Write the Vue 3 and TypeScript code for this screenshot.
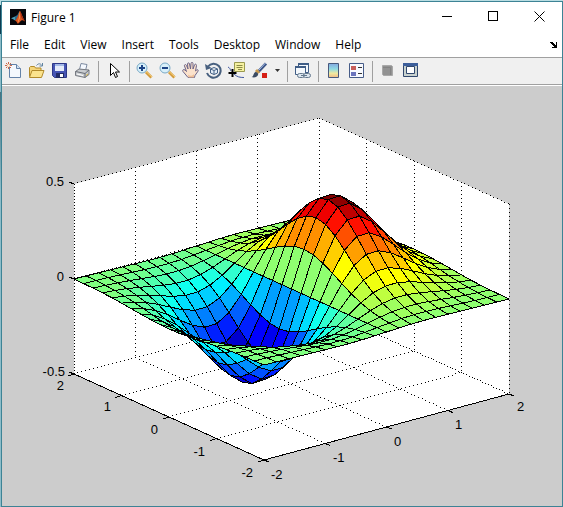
<script setup lang="ts">
type Point = [number, number]

interface Face {
  points: string
  fill: string
}

interface Label {
  text: string
  x: number
  y: number
  anchor: 'start' | 'middle' | 'end'
}

const menus: string[] = ['File', 'Edit', 'View', 'Insert', 'Tools', 'Desktop', 'Window', 'Help']

/* Orthographic projection of data coordinates into the figure canvas. */
function project(x: number, y: number, z: number): Point {
  return [
    262 + 61.25 * (x + 2) - 47.5 * (y + 2),
    374 - 16.5 * (x + 2) - 21.5 * (y + 2) - 190 * (z + 0.5),
  ]
}

function toPoints(list: Point[]): string {
  return list.map(([x, y]) => `${x.toFixed(1)},${y.toFixed(1)}`).join(' ')
}

const nodes: number[] = Array.from({ length: 21 }, (_, i) => (i - 10) / 5)
const height = (x: number, y: number): number => x * Math.exp(-x * x - y * y)
const peak = height(0.8, 0)

/* 64-step jet colormap. */
function ramp(k: number): number {
  if (k < 1 || k > 47) return 0
  if (k <= 16) return k / 16
  if (k <= 31) return 1
  return (48 - k) / 16
}

function jet(z: number): string {
  const k = Math.min(64, Math.floor(((z + peak) / (2 * peak)) * 64 + 1e-9) + 1)
  const channel = (offset: number) => Math.round(255 * ramp(k + offset))
  return `rgb(${channel(-24)}, ${channel(-8)}, ${channel(8)})`
}

/* Faces are listed from the far corner to the near one. */
const faces: Face[] = []
for (let i = 19; i >= 0; i--) {
  for (let j = 19; j >= 0; j--) {
    const [x0, x1, y0, y1] = [nodes[i], nodes[i + 1], nodes[j], nodes[j + 1]]
    const corners: Point[] = [[x0, y0], [x1, y0], [x1, y1], [x0, y1]]
    faces.push({
      points: toPoints(corners.map(([x, y]) => project(x, y, height(x, y)))),
      fill: jet(height(x0, y0)),
    })
  }
}

/* A dotted line as single-pixel squares. */
function dots(a: Point, b: Point, gap = 4): string {
  const length = Math.hypot(b[0] - a[0], b[1] - a[1])
  let d = ''
  for (let s = 0; s <= length; s += gap) {
    const t = s / length
    const x = Math.floor(a[0] + (b[0] - a[0]) * t)
    const y = Math.floor(a[1] + (b[1] - a[1]) * t)
    d += `M${x} ${y}h1v1h-1z`
  }
  return d
}

const walls = toPoints([
  project(-2, -2, -0.5),
  project(2, -2, -0.5),
  project(2, -2, 0.5),
  project(2, 2, 0.5),
  project(-2, 2, 0.5),
  project(-2, 2, -0.5),
])

const inner = [-1, 0, 1]
const grid: string = [
  ...inner.map((x) => dots(project(x, 2, 0.5), project(x, 2, -0.5))),
  ...inner.map((y) => dots(project(2, y, 0.5), project(2, y, -0.5))),
  ...inner.map((x) => dots(project(x, -2, -0.5), project(x, 2, -0.5))),
  ...inner.map((y) => dots(project(-2, y, -0.5), project(2, y, -0.5))),
  dots(project(2, 2, 0.5), project(2, 2, -0.5)),
  dots(project(-2, 2, 0.5), project(2, 2, 0.5)),
  dots(project(2, 2, 0.5), project(2, -2, 0.5)),
  dots(project(-2, 2, 0), project(2, 2, 0)),
  dots(project(2, 2, 0), project(2, -2, 0)),
  dots(project(-2, 2, -0.5), project(2, 2, -0.5)),
  dots(project(2, 2, -0.5), project(2, -2, -0.5), 3),
  dots(project(-2, 2, 0.5), project(-2, 2, -0.5), 3),
  dots(project(2, -2, 0.5), project(2, -2, -0.5)),
].join('')

const axisLine = toPoints([project(-2, 2, -0.5), project(-2, -2, -0.5), project(2, -2, -0.5)])

const ticks: string = [
  ...[-2, -1, 0, 1, 2].map((x) => [project(x, -2, -0.5), [5, 2]] as [Point, Point]),
  ...[-2, -1, 0, 1, 2].map((y) => [project(-2, y, -0.5), [-6, 2]] as [Point, Point]),
  ...[-0.5, 0, 0.5].map((z) => [project(-2, 2, z), [-5, -2]] as [Point, Point]),
]
  .map(([p, d]) => `M${p[0]} ${p[1]}l${d[0]} ${d[1]}`)
  .join('')

const labels: Label[] = [
  { text: '0.5', x: 62, y: 100, anchor: 'end' },
  { text: '0', x: 62, y: 195, anchor: 'end' },
  { text: '-0.5', x: 63, y: 290, anchor: 'end' },
  { text: '2', x: 62, y: 304, anchor: 'end' },
  { text: '1', x: 109, y: 325, anchor: 'end' },
  { text: '0', x: 156, y: 348, anchor: 'end' },
  { text: '-1', x: 203, y: 370, anchor: 'end' },
  { text: '-2', x: 251, y: 391, anchor: 'end' },
  { text: '-2', x: 269, y: 393, anchor: 'start' },
  { text: '-1', x: 331, y: 376, anchor: 'start' },
  { text: '0', x: 392, y: 360, anchor: 'start' },
  { text: '1', x: 453, y: 343, anchor: 'start' },
  { text: '2', x: 515, y: 325, anchor: 'start' },
]
</script>

<template>
  <div class="window">
    <header class="titlebar">
      <svg class="logo" viewBox="0 0 16 16" aria-hidden="true">
        <rect width="16" height="16" fill="#07070b" />
        <path d="M1 9.2 5 7.4 7.2 8.6 5 11.4 3.6 10.6z" fill="#4b9db5" />
        <path d="M5 7.4 7.4 6 9.6 1.8 8.6 7.6 5 11.4z" fill="#2c6c8c" />
        <path d="M5 11.4C7.6 9.8 8.2 5.6 9.8 1.8 11 2.6 12.6 8.6 15 12.6 12.6 10.8 11.6 11 9.8 13 8.8 14.4 8 14.6 7.4 14.4 7 12.8 6 11.8 5 11.4z" fill="#d9531e" />
        <path d="M9.8 1.8C9.4 5.8 9.2 9.6 7.6 13.8 9.4 12 10.6 9 9.8 1.8z" fill="#f7a55a" />
        <path d="M10 2.2C11.2 3.4 12.6 8.6 15 12.6 12.8 10.8 12 10 11.2 8z" fill="#a52d12" />
      </svg>
      <h1>Figure 1</h1>
      <div class="captions">
        <button type="button" aria-label="Minimize">
          <svg viewBox="0 0 11 11"><path d="M0 5.5h10" /></svg>
        </button>
        <button type="button" aria-label="Maximize">
          <svg viewBox="0 0 11 11"><path d="M.5.5h9v9h-9z" /></svg>
        </button>
        <button type="button" aria-label="Close">
          <svg viewBox="0 0 11 11"><path class="smooth" d="M.5.5l10 10M10.500.5l-10 10" /></svg>
        </button>
      </div>
    </header>

    <nav class="menubar" aria-label="Menu">
      <button v-for="menu in menus" :key="menu" type="button">{{ menu }}</button>
      <button class="dock" type="button" aria-label="Dock figure">
        <svg viewBox="0 0 8 7"><path d="M0 1h3v1h1v1h1v1h1V1h1v6H2V6h2V5H3V4H2V3H1V2H0z" /></svg>
      </button>
    </nav>

    <div class="toolbar" role="toolbar" aria-label="Figure toolbar">
      <button type="button" aria-label="New figure">
        <svg viewBox="0 0 17 17">
          <path d="M4.500 2.500h7l4 4v9h-11z" fill="#f4f8fd" stroke="#6482a8" />
          <path d="M11.500 2.500v4h4" fill="#d3e2f4" stroke="#6482a8" />
          <path d="M3.500 0v7M0 3.500h7M1 1l5 5M6 1 1 6" stroke="#c9694a" fill="none" />
          <circle cx="3.500" cy="3.500" r="1.500" fill="#fff0d8" />
        </svg>
      </button>
      <button type="button" aria-label="Open file">
        <svg viewBox="0 0 17 17">
          <path d="M1.500 14.500v-9l1-1h4l1 1.500h5.500v2" fill="#f5d57a" stroke="#b18a2b" />
          <path d="M1.500 15.500 4 8.500h12l-2.500 7z" fill="#fbe38d" stroke="#b18a2b" />
          <path d="M8.500 3.500c2-2.500 4-2 5.500 0M14.500 1v3h-3" fill="none" stroke="#5f82a0" />
        </svg>
      </button>
      <button type="button" aria-label="Save figure">
        <svg viewBox="0 0 17 17">
          <path d="M1.500 1.500h14v14h-12l-2-2z" fill="#4655b4" stroke="#2d3888" />
          <path d="M4 2h9v7H4z" fill="#e4ebfa" />
          <path d="M4 2h9v2H4z" fill="#a4b9e6" />
          <path d="M5 11h8v5H5z" fill="#222c66" />
          <path d="M9 12h3v3H9z" fill="#fff" />
        </svg>
      </button>
      <button type="button" aria-label="Print figure">
        <svg viewBox="0 0 17 17">
          <path d="M5.500 7.500 7 1.500l6 1-1.500 6z" fill="#f5f9ff" stroke="#7c8aa0" />
          <path d="M1.500 9.500 5 7l10 1v4.500l-4 3-9.500-2z" fill="#c9ccd0" stroke="#777b82" />
          <path d="M1.500 9.500l9.500 2 4-3.500M11 11.500v4" fill="none" stroke="#686d75" />
          <path d="M3 12l6 1.500" stroke="#fff" />
          <path d="M12 13.500l2-1.500" stroke="#d9b53d" />
        </svg>
      </button>
      <span class="separator" />
      <button type="button" aria-label="Edit plot">
        <svg viewBox="0 0 17 17">
          <path d="M5.500 1.500v12l3-3 2 5 2-1-2-4.500h4z" fill="#fff" stroke="#000" />
        </svg>
      </button>
      <span class="separator" />
      <button type="button" aria-label="Zoom in">
        <svg viewBox="0 0 17 17">
          <path d="M10 10l5.500 5.500" stroke="#d39a3a" stroke-width="3" />
          <path d="M10 9.500l6 5.500" stroke="#f6cf7c" />
          <circle cx="6" cy="6" r="5" fill="#d8f0fa" stroke="#79a9c6" />
          <path d="M6 3v6M3 6h6" stroke="#1d4486" stroke-width="2" />
        </svg>
      </button>
      <button type="button" aria-label="Zoom out">
        <svg viewBox="0 0 17 17">
          <path d="M10 10l5.500 5.500" stroke="#d39a3a" stroke-width="3" />
          <path d="M10 9.500l6 5.500" stroke="#f6cf7c" />
          <circle cx="6" cy="6" r="5" fill="#d8f0fa" stroke="#79a9c6" />
          <path d="M3 6h6" stroke="#1d4486" stroke-width="2" />
        </svg>
      </button>
      <button type="button" aria-label="Pan">
        <svg viewBox="0 0 17 17">
          <path
            d="M6 15.500 1 9.500c-1-1.500.5-2.500 2-1.500l1.500 1.500L2.500 4c-.5-1.500 1.500-2 2-.5L6 7 5.500 2c0-1.500 2-1.500 2 0l1 5 .5-5.500c0-1.500 2-1.500 2 0L11 7l1.500-4c.5-1.500 2-1 2 .500L13.500 9l1.200-1c1.300-.8 1.800.2 1.300 1.200l-3 4.300-.5 2z"
            fill="#fbe2cc" stroke="#6c6488"
          />
          <path d="M6 12.500c2 2 4.500 1.500 6-.5v3.500H6.500z" fill="#eebf98" />
        </svg>
      </button>
      <button type="button" aria-label="Rotate 3D">
        <svg viewBox="0 0 17 17">
          <path d="M3 4.500A7 7 0 1 1 2 11" fill="none" stroke="#48607f" stroke-width="2" />
          <path d="M0 2l1 6 5.500-2z" fill="#48607f" />
          <path d="M5.500 7 9 5.500 12.500 7v4L9 12.500 5.500 11zM5.500 7 9 8.500 12.500 7M9 8.500v4" fill="#e3edf8" stroke="#466286" />
        </svg>
      </button>
      <button type="button" aria-label="Data cursor">
        <svg viewBox="0 0 17 17">
          <path d="M6.500.5h10v9h-10z" fill="#f6f2a2" stroke="#9b9a50" />
          <path d="M8.500 3.500h6M8.500 5.500h6M10 7.500h4" stroke="#8d8b45" />
          <path d="M0 5c2 1 2 2 3 4M6 12c3 3 6 3.500 10 3.500" fill="none" stroke="#4058a0" />
          <path d="M4.500 7v8M.5 11h8" stroke="#000" stroke-width="2" />
        </svg>
      </button>
      <button type="button" aria-label="Brush data">
        <svg viewBox="0 0 17 17">
          <path d="M7 10 15 1.500" stroke="#3e5688" stroke-width="3" />
          <path d="M7.500 8.500l7-7.500" stroke="#a9c0e6" />
          <path d="M5 8l3 3" stroke="#c89a50" stroke-width="3" />
          <path d="M.5 15c2.500-.5 1.500-4 4-5 2 0 3 1.500 2.500 3-1 2.500-4 3-6.500 2z" fill="#3b4b63" />
          <path d="M11 11h5v5h-5z" fill="#d51f16" />
        </svg>
      </button>
      <button class="caret" type="button" aria-label="Brush options">
        <svg viewBox="0 0 5 3"><path d="M0 0h5L2.500 3z" fill="#333" /></svg>
      </button>
      <span class="separator" />
      <button type="button" aria-label="Link plot">
        <svg viewBox="0 0 17 17">
          <path d="M4.500 1.500h10v9h-10z" fill="#f4f8fc" stroke="#3f5d86" />
          <path d="M4 1h11v2H4z" fill="#3f5d86" />
          <path d="M1.500 4.500h10v8h-10z" fill="#f4f8fc" stroke="#3f5d86" />
          <path d="M1 4h11v2H1z" fill="#3f5d86" />
          <rect x="3.500" y="11.500" width="7" height="4" rx="2" fill="#dbe5ee" stroke="#64798e" />
          <rect x="9.500" y="11.500" width="7" height="4" rx="2" fill="#dbe5ee" stroke="#64798e" />
          <path d="M7 13.500h6" stroke="#64798e" />
        </svg>
      </button>
      <span class="separator" />
      <button type="button" aria-label="Insert colorbar">
        <svg viewBox="0 0 17 17">
          <defs>
            <linearGradient id="colorbar-fill" x1="0" y1="0" x2="0" y2="1">
              <stop offset="0" stop-color="#84a8e0" />
              <stop offset=".4" stop-color="#8fdbe4" />
              <stop offset=".7" stop-color="#f1eaa0" />
              <stop offset="1" stop-color="#f1ba86" />
            </linearGradient>
          </defs>
          <path d="M3.500 1.500h10v14h-10z" fill="url(#colorbar-fill)" stroke="#48597c" />
        </svg>
      </button>
      <button type="button" aria-label="Insert legend">
        <svg viewBox="0 0 17 17">
          <path d="M1.500 1.500h14v14h-14z" fill="#f8faff" stroke="#465c88" />
          <path d="M3 4h5v4H3z" fill="#c8605c" />
          <path d="M3 10h5v4H3z" fill="#6a74bd" />
          <path d="M10 5.500h4M10 11.500h4" stroke="#333" />
        </svg>
      </button>
      <span class="separator" />
      <button type="button" aria-label="Hide plot tools">
        <svg viewBox="0 0 17 17">
          <path d="M3.500 3.500h9l1 1v9h-9l-1-1z" fill="#929292" stroke="#a8a8a8" />
          <path d="M4 5.500h7.500V13" fill="none" stroke="#838383" />
        </svg>
      </button>
      <button type="button" aria-label="Show plot tools">
        <svg viewBox="0 0 17 17">
          <path d="M1.500 1.500h14v13h-14z" fill="#c9d2cf" stroke="#31486e" />
          <path d="M1 1h15v3H1z" fill="#3d5f9b" />
          <path d="M4.500 4.500h8v7h-8z" fill="#fff" stroke="#31486e" />
        </svg>
      </button>
    </div>

    <main class="figure">
      <svg viewBox="0 0 560 420" role="img" aria-label="Surface plot">
        <polygon :points="walls" fill="#fff" />
        <path :d="grid" class="dots" />
        <g class="surface">
          <polygon v-for="(face, index) in faces" :key="index" :points="face.points" :fill="face.fill" />
        </g>
        <polyline :points="axisLine" class="axis" />
        <path :d="ticks" class="axis" />
        <text v-for="(label, index) in labels" :key="index" :x="label.x" :y="label.y" :text-anchor="label.anchor">{{ label.text }}</text>
      </svg>
    </main>
  </div>
</template>

<style>
body {
  background: linear-gradient(#b9dde2 5px, #0d3c50 5px, #0d3c50 34px, #8dbcc8 34px, #8dbcc8 92px, #49727f 92px, #8dbcc8 190px);
}
</style>

<style scoped>
.window {
  box-sizing: border-box;
  display: flex;
  flex-direction: column;
  min-height: calc(100vh - 1px);
  margin: 1px 0 0 1px;
  border: 1px solid #3d8395;
  background: #fff;
  color: #000;
  font-family: "Open Sans", "Noto Sans", sans-serif;
  font-size: 12px;
}

button {
  display: flex;
  align-items: center;
  justify-content: center;
  padding: 0;
  border: 0;
  background: none;
  color: inherit;
  font: inherit;
}

.titlebar {
  display: flex;
  align-items: center;
  height: 30px;
  padding-left: 8px;
}

.logo {
  width: 16px;
  height: 16px;
  margin-right: 5px;
}

h1 {
  margin: 0;
  font-size: 12px;
  font-weight: 400;
}

.captions {
  display: flex;
  height: 28px;
  margin-left: auto;
  align-self: flex-start;
}

.captions button {
  width: 46px;
}

.captions svg {
  width: 11px;
  height: 11px;
  fill: none;
  stroke: #000;
  shape-rendering: crispEdges;
}

.captions .smooth {
  shape-rendering: auto;
}

.menubar {
  display: flex;
  align-items: center;
  gap: 15px;
  height: 25px;
  padding: 0 4px 0 8px;
}

.dock {
  margin-left: auto;
}

.dock svg {
  width: 8px;
  height: 7px;
}

.toolbar {
  display: flex;
  height: 25px;
  padding-bottom: 1px;
  margin-bottom: 1px;
  border-top: 1px solid #a0a0a0;
  border-bottom: 1px solid #a0a0a0;
  background: #f0f0f0;
}

.toolbar button {
  width: 23px;
}

.toolbar svg {
  width: 17px;
  height: 17px;
}

.toolbar .caret {
  width: 12px;
}

.toolbar .caret svg {
  width: 5px;
  height: 3px;
}

.separator {
  width: 1px;
  margin: 3px 3px 1px 4px;
  background: #a0a0a0;
}

.figure {
  flex: 1;
  background: #ccc;
}

.figure svg {
  display: block;
  width: 100%;
}

.figure text {
  font-family: "Liberation Sans", Arial, sans-serif;
  font-size: 13px;
}

.dots {
  shape-rendering: crispEdges;
}

.surface {
  stroke: #000;
  stroke-width: 1;
  stroke-linejoin: round;
  shape-rendering: crispEdges;
}

.axis {
  fill: none;
  stroke: #000;
  shape-rendering: crispEdges;
}
</style>
